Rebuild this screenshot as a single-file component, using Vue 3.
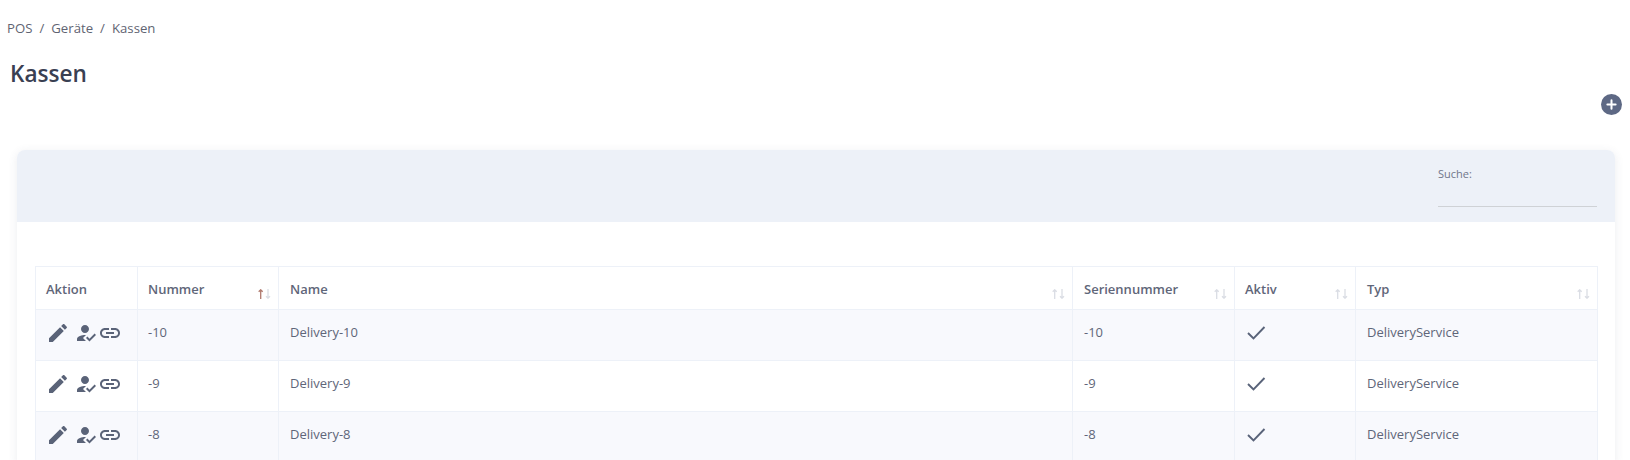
<template>
  <div class="page">
    <nav class="breadcrumb">
      <span>POS</span><span class="sep">/</span><span>Geräte</span><span class="sep">/</span><span>Kassen</span>
    </nav>
    <h1 class="title">Kassen</h1>

    <div class="add-row">
      <button class="add-btn" aria-label="Neu">
        <svg viewBox="0 0 12 12" width="11" height="11"><path d="M6 1.5v9M1.5 6h9" stroke="#fff" stroke-width="2.2" stroke-linecap="round" fill="none" /></svg>
      </button>
    </div>

    <section class="card">
      <header class="card-head">
        <label class="search">
          <span>Suche:</span>
          <input type="text" />
        </label>
      </header>

      <div class="card-body">
        <table class="grid">
          <colgroup>
            <col v-for="c in columns" :key="c.label" :style="{ width: c.width + 'px' }" />
          </colgroup>
          <thead>
            <tr>
              <th v-for="c in columns" :key="c.label">
                {{ c.label }}
                <svg v-if="c.sortable" class="sort" :class="{ active: c.active }" viewBox="0 0 15 10" width="15" height="10">
                  <path class="up" d="M3.7 10V1M1.7 2.8l2-2 2 2" />
                  <path d="M11 0v9M9 7.2l2 2 2-2" />
                </svg>
              </th>
            </tr>
          </thead>
          <tbody>
            <tr v-for="row in rows" :key="row.nr">
              <td class="actions">
                <div class="icons">
                  <svg class="ic-edit" viewBox="0 0 24 24"><path d="M3 17.25V21h3.75L17.81 9.94l-3.75-3.75L3 17.25zM20.71 7.04c.39-.39.39-1.02 0-1.41l-2.34-2.34c-.39-.39-1.02-.39-1.41 0l-1.83 1.83 3.75 3.75 1.83-1.83z" /></svg>
                  <svg viewBox="0 0 24 24"><path d="M9 17l3-2.94c-.39-.04-.68-.06-1-.06-2.67 0-8 1.34-8 4v2h9l-3-3zm2-5c2.21 0 4-1.79 4-4s-1.79-4-4-4-4 1.79-4 4 1.79 4 4 4m4.47 8.5L12 17l1.4-1.41 2.07 2.08 5.13-5.17 1.4 1.41z" /></svg>
                  <svg viewBox="0 0 24 24"><path d="M3.9 12c0-1.71 1.39-3.1 3.1-3.1h4V7H7c-2.76 0-5 2.24-5 5s2.24 5 5 5h4v-1.9H7c-1.71 0-3.1-1.39-3.1-3.1zM8 13h8v-2H8v2zm9-6h-4v1.9h4c1.71 0 3.1 1.39 3.1 3.1s-1.39 3.1-3.1 3.1h-4V17h4c2.76 0 5-2.24 5-5s-2.24-5-5-5z" /></svg>
                </div>
              </td>
              <td>{{ row.nr }}</td>
              <td>Delivery{{ row.nr }}</td>
              <td>{{ row.nr }}</td>
              <td>
                <svg class="check" viewBox="0 0 20 15" width="20" height="15"><path d="M2 8l5.5 5.5L18.5 2" fill="none" stroke="#596379" stroke-width="1.9" /></svg>
              </td>
              <td>DeliveryService</td>
            </tr>
          </tbody>
        </table>
      </div>
    </section>
  </div>
</template>

<script setup>
const columns = [
  { label: 'Aktion', width: 102 },
  { label: 'Nummer', width: 141, sortable: true, active: true },
  { label: 'Name', width: 794, sortable: true },
  { label: 'Seriennummer', width: 162, sortable: true },
  { label: 'Aktiv', width: 121, sortable: true },
  { label: 'Typ', width: 242, sortable: true }
]

const rows = [{ nr: '-10' }, { nr: '-9' }, { nr: '-8' }]
</script>

<style>
html,
body {
  margin: 0;
  overflow: hidden;
  background: #fff;
}
</style>

<style scoped>
.page {
  height: 460px;
  overflow: hidden;
  font-family: "Open Sans", "Noto Sans", sans-serif;
  color: #5f6679;
  box-sizing: border-box;
  padding-top: 19px;
}

.breadcrumb {
  padding-left: 7px;
  font-size: 13.2px;
  line-height: 18px;
  color: #5f6472;
}
.sep {
  margin: 0 7px;
}

.title {
  margin: 22px 0 0 10px;
  font-size: 22.6px;
  line-height: 30px;
  font-weight: 600;
  color: #3a4052;
}

.add-row {
  display: flex;
  justify-content: flex-end;
  padding-right: 8px;
  margin-top: 5px;
}
.add-btn {
  width: 21px;
  height: 21px;
  padding: 0;
  border: none;
  border-radius: 50%;
  background: #5d6884;
  display: flex;
  align-items: center;
  justify-content: center;
}

.card {
  margin: 35px 15px 0 17px;
  border-radius: 8px 8px 0 0;
  background: #fff;
  box-shadow: 0 2px 10px rgba(60, 70, 100, 0.1);
}

.card-head {
  height: 72px;
  box-sizing: border-box;
  background: #edf1f8;
  border-radius: 8px 8px 0 0;
  display: flex;
  justify-content: flex-end;
  padding: 16px 18px 0 0;
}
.search {
  width: 159px;
  display: flex;
  flex-direction: column;
  font-size: 11px;
  line-height: 15px;
  color: #70768a;
}
.search input {
  margin-top: 8px;
  height: 17px;
  padding: 0;
  border: none;
  border-bottom: 1px solid #cfd2d6;
  background: transparent;
  outline: none;
}

.card-body {
  padding: 44px 18px 0;
}

.grid {
  width: 1562px;
  table-layout: fixed;
  border-collapse: collapse;
  font-size: 13px;
  color: #5f6679;
}
.grid th,
.grid td {
  border: 1px solid #edf1f8;
  padding: 0 0 0 11px;
  text-align: left;
  box-sizing: border-box;
}
.grid th:nth-child(-n + 2),
.grid td:nth-child(-n + 2),
.grid th:nth-child(5) {
  padding-left: 10px;
}
.grid th {
  position: relative;
  height: 43px;
  padding-top: 2px;
  font-weight: 600;
  color: #5f6679;
}
.grid td {
  height: 51px;
  padding-bottom: 7px;
}
.grid tbody tr:nth-child(odd) {
  background: #f8f9fd;
}

.sort {
  position: absolute;
  right: 6px;
  top: 22px;
  fill: none;
  stroke: #dadde4;
  stroke-width: 1.3;
}
.sort.active .up {
  stroke: #b07a6e;
}

.icons {
  display: flex;
  margin-top: 2px;
}
.icons svg {
  width: 24px;
  height: 24px;
  fill: #5a6378;
  flex: none;
}
.ic-edit {
  margin-right: 4px;
}
.check {
  display: block;
  margin-top: 2px;
}
</style>
